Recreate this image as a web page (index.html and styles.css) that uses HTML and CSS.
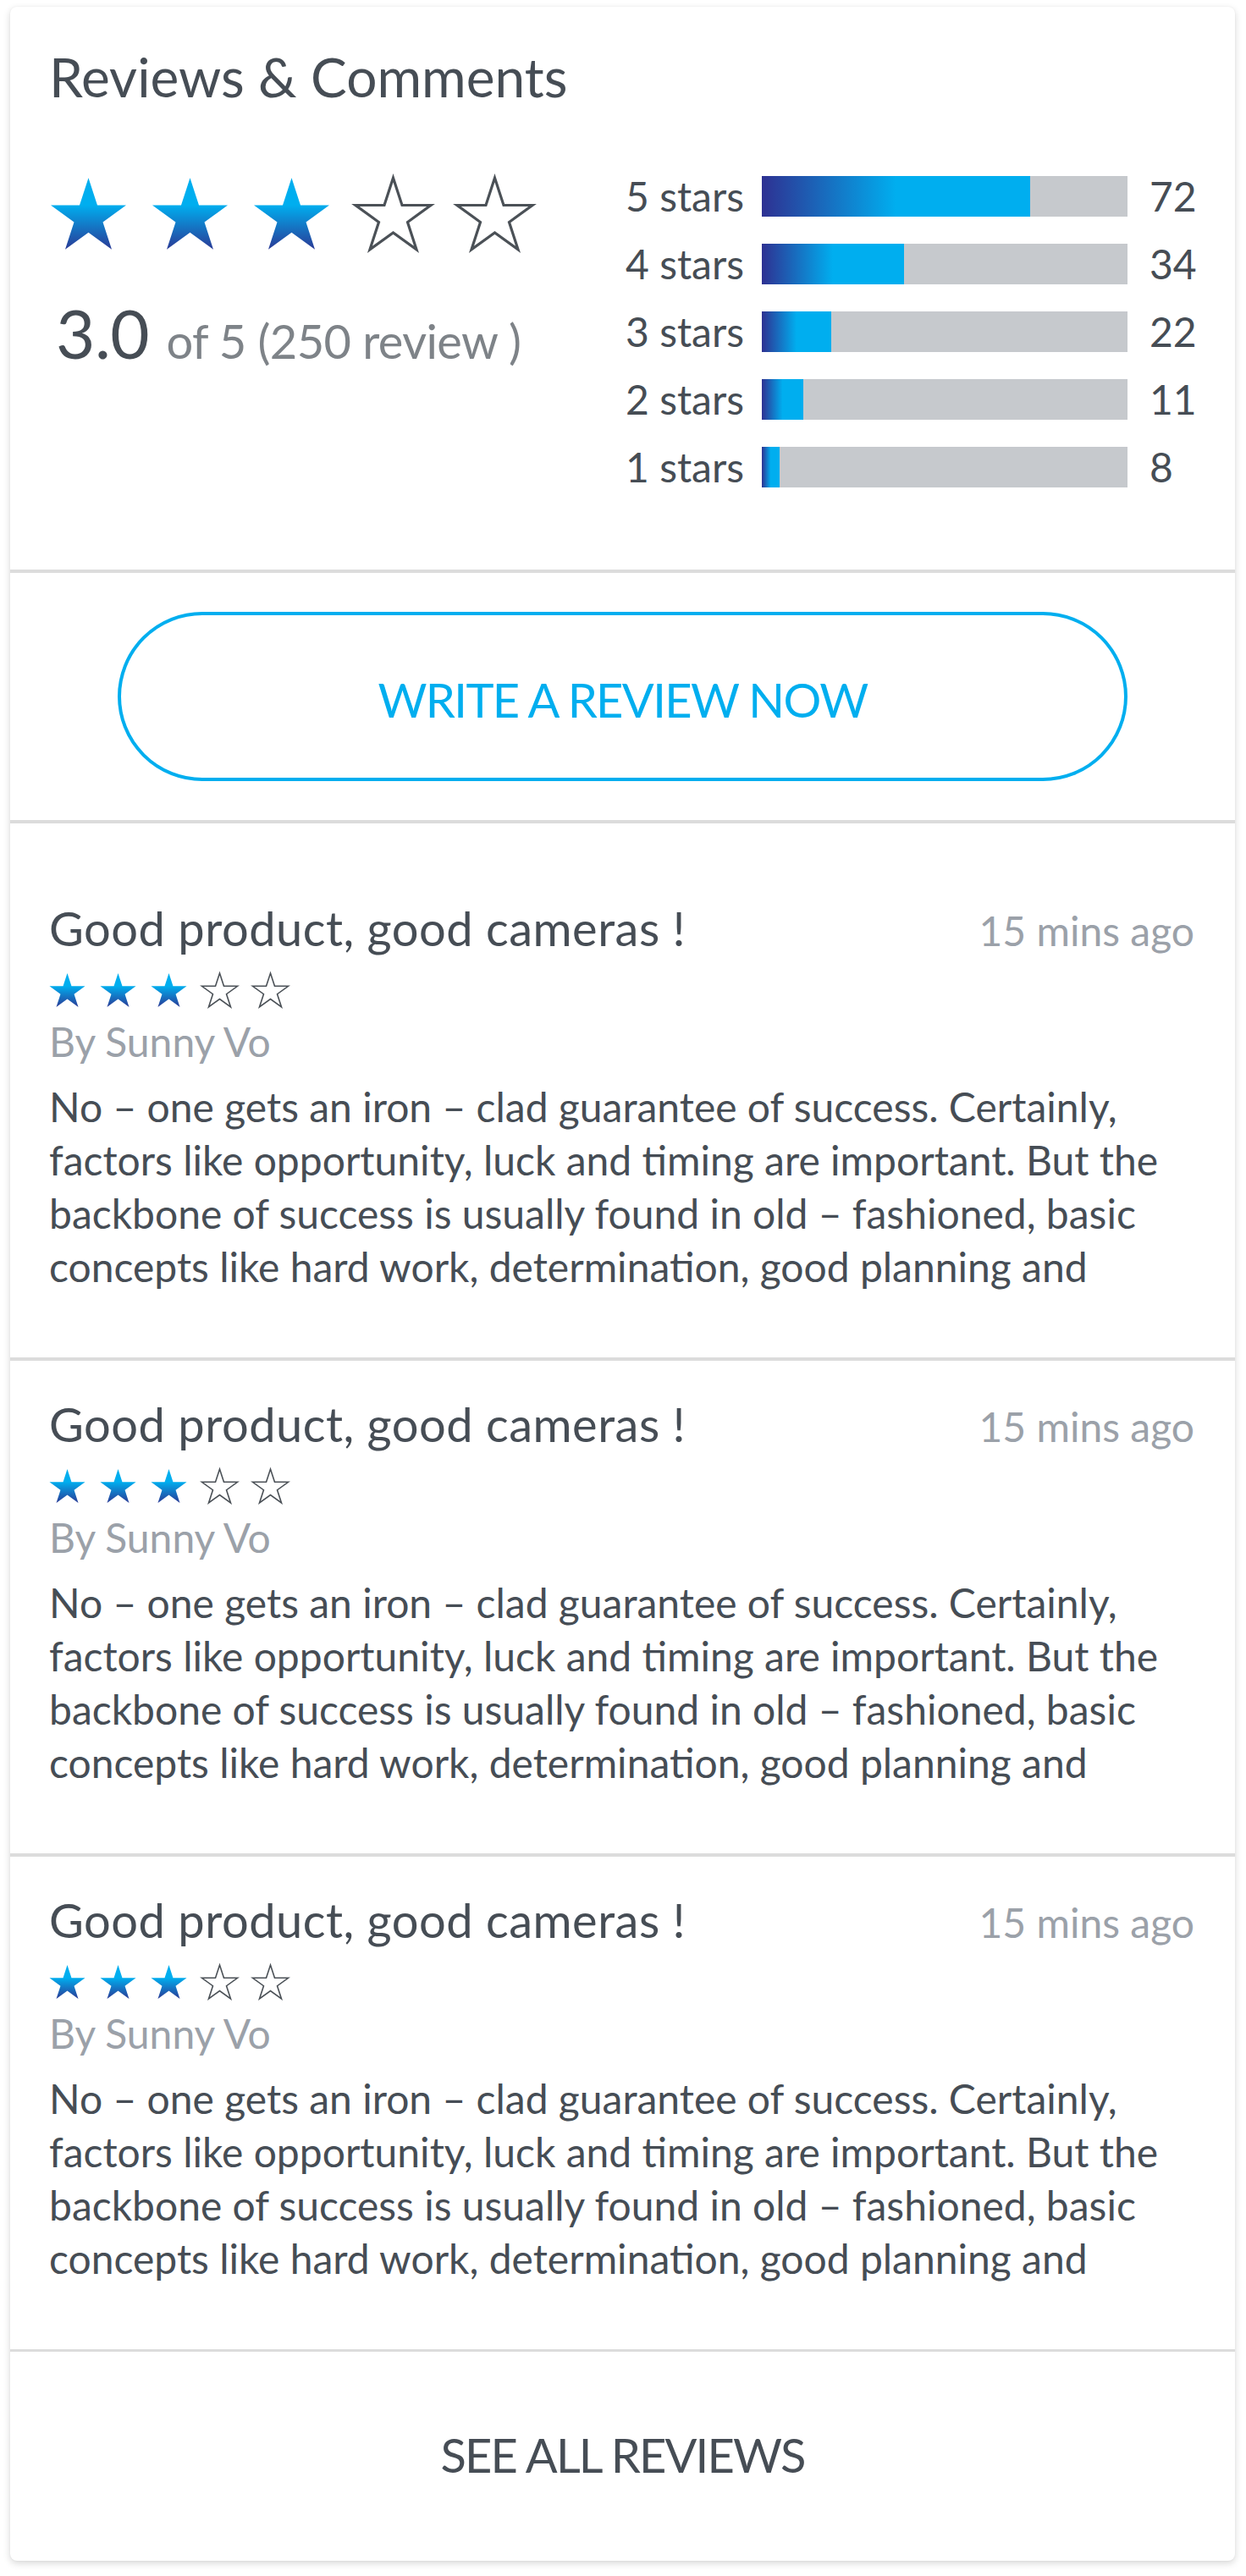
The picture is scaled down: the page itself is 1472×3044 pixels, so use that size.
FILE: index.html
```html
<!DOCTYPE html>
<html lang="en">
<head>
<meta charset="utf-8">
<title>Reviews &amp; Comments</title>
<link rel="stylesheet" href="styles.css">
</head>
<body>
<svg class="defs" width="0" height="0" aria-hidden="true">
  <defs>
    <linearGradient id="starGrad" x1="0" y1="0" x2="0" y2="1">
      <stop offset="0.38" stop-color="#00aeef"/>
      <stop offset="1" stop-color="#2a3a96"/>
    </linearGradient>
    <path id="starShape" d="M50 0 L61.23 34.55 L97.55 34.55 L68.17 55.9 L79.39 90.45 L50 69.1 L20.61 90.45 L31.83 55.9 L2.45 34.55 L38.77 34.55 Z"/>
  </defs>
</svg>

<div class="card">
  <section class="summary">
    <h1 class="title">Reviews &amp; Comments</h1>
    <div class="summary-body">
      <div class="overall">
        <div class="stars stars-lg">
          <svg class="star full" viewBox="2.45 0 95.1 90.45"><use href="#starShape"/></svg>
          <svg class="star full" viewBox="2.45 0 95.1 90.45"><use href="#starShape"/></svg>
          <svg class="star full" viewBox="2.45 0 95.1 90.45"><use href="#starShape"/></svg>
          <svg class="star empty" viewBox="2.45 0 95.1 90.45"><use href="#starShape"/></svg>
          <svg class="star empty" viewBox="2.45 0 95.1 90.45"><use href="#starShape"/></svg>
        </div>
        <div class="score"><span class="score-num">3.0</span> <span class="score-of">of 5 (250 review )</span></div>
      </div>
      <div class="breakdown">
        <div class="bar-row"><span class="bar-label">5 stars</span><div class="bar"><div class="bar-fill" style="width:73.4%"></div></div><span class="bar-count">72</span></div>
        <div class="bar-row"><span class="bar-label">4 stars</span><div class="bar"><div class="bar-fill" style="width:39%"></div></div><span class="bar-count">34</span></div>
        <div class="bar-row"><span class="bar-label">3 stars</span><div class="bar"><div class="bar-fill" style="width:19%"></div></div><span class="bar-count">22</span></div>
        <div class="bar-row"><span class="bar-label">2 stars</span><div class="bar"><div class="bar-fill" style="width:11.4%"></div></div><span class="bar-count">11</span></div>
        <div class="bar-row"><span class="bar-label">1 stars</span><div class="bar"><div class="bar-fill" style="width:4.9%"></div></div><span class="bar-count">8</span></div>
      </div>
    </div>
  </section>

  <section class="write">
    <button class="write-btn" type="button">WRITE A REVIEW NOW</button>
  </section>

  <section class="review review-first">
    <div class="review-head">
      <h2 class="review-title">Good product, good cameras !</h2>
      <span class="review-time">15 mins ago</span>
    </div>
    <div class="stars stars-sm">
      <svg class="star full" viewBox="2.45 0 95.1 90.45"><use href="#starShape"/></svg>
      <svg class="star full" viewBox="2.45 0 95.1 90.45"><use href="#starShape"/></svg>
      <svg class="star full" viewBox="2.45 0 95.1 90.45"><use href="#starShape"/></svg>
      <svg class="star empty" viewBox="2.45 0 95.1 90.45"><use href="#starShape"/></svg>
      <svg class="star empty" viewBox="2.45 0 95.1 90.45"><use href="#starShape"/></svg>
    </div>
    <div class="review-author">By Sunny Vo</div>
    <p class="review-body">No – one gets an iron – clad guarantee of success. Certainly, factors like opportunity, luck and timing are important. But the backbone of success is usually found in old – fashioned, basic concepts like hard work, determination, good planning and</p>
  </section>

  <section class="review">
    <div class="review-head">
      <h2 class="review-title">Good product, good cameras !</h2>
      <span class="review-time">15 mins ago</span>
    </div>
    <div class="stars stars-sm">
      <svg class="star full" viewBox="2.45 0 95.1 90.45"><use href="#starShape"/></svg>
      <svg class="star full" viewBox="2.45 0 95.1 90.45"><use href="#starShape"/></svg>
      <svg class="star full" viewBox="2.45 0 95.1 90.45"><use href="#starShape"/></svg>
      <svg class="star empty" viewBox="2.45 0 95.1 90.45"><use href="#starShape"/></svg>
      <svg class="star empty" viewBox="2.45 0 95.1 90.45"><use href="#starShape"/></svg>
    </div>
    <div class="review-author">By Sunny Vo</div>
    <p class="review-body">No – one gets an iron – clad guarantee of success. Certainly, factors like opportunity, luck and timing are important. But the backbone of success is usually found in old – fashioned, basic concepts like hard work, determination, good planning and</p>
  </section>

  <section class="review">
    <div class="review-head">
      <h2 class="review-title">Good product, good cameras !</h2>
      <span class="review-time">15 mins ago</span>
    </div>
    <div class="stars stars-sm">
      <svg class="star full" viewBox="2.45 0 95.1 90.45"><use href="#starShape"/></svg>
      <svg class="star full" viewBox="2.45 0 95.1 90.45"><use href="#starShape"/></svg>
      <svg class="star full" viewBox="2.45 0 95.1 90.45"><use href="#starShape"/></svg>
      <svg class="star empty" viewBox="2.45 0 95.1 90.45"><use href="#starShape"/></svg>
      <svg class="star empty" viewBox="2.45 0 95.1 90.45"><use href="#starShape"/></svg>
    </div>
    <div class="review-author">By Sunny Vo</div>
    <p class="review-body">No – one gets an iron – clad guarantee of success. Certainly, factors like opportunity, luck and timing are important. But the backbone of success is usually found in old – fashioned, basic concepts like hard work, determination, good planning and</p>
  </section>

  <section class="see-all">
    <a class="see-all-link" href="#">SEE ALL REVIEWS</a>
  </section>
</div>
</body>
</html>
```

FILE: styles.css
```css
html, body {
  margin: 0;
  padding: 0;
  background: #ffffff;
}

body {
  font-family: Lato, "Open Sans", "Liberation Sans", sans-serif;
  color: #464d55;
}

.defs {
  position: absolute;
  width: 0;
  height: 0;
  overflow: hidden;
}

.card {
  width: 1447px;
  margin: 8px 0 24px 12px;
  background: #ffffff;
  border-radius: 8px;
  box-shadow: 0 3px 8px rgba(0, 0, 0, 0.16), 0 0 2px rgba(0, 0, 0, 0.06);
  overflow: hidden;
}

/* ---------- summary ---------- */
.summary {
  padding: 43px 48px 97px 46px;
}

.title {
  margin: 0;
  font-size: 64px;
  line-height: 80px;
  font-weight: 400;
  color: #464d55;
}

.summary-body {
  display: flex;
  margin-top: 77px;
}

.overall {
  width: 681px;
  flex: none;
}

.stars {
  display: flex;
}

.star {
  display: block;
  overflow: visible;
}

.star.full use {
  fill: url(#starGrad);
}

.star.empty use {
  fill: #ffffff;
  stroke: #4b5157;
  stroke-linejoin: miter;
}

.stars-lg {
  gap: 31px;
  margin-top: 2px;
  margin-left: 2px;
}

.stars-lg .star {
  width: 89px;
  height: 85px;
}

.stars-lg .star.empty use {
  stroke-width: 3.4;
}

.stars-sm {
  gap: 17px;
  margin-top: 18px;
}

.stars-sm .star {
  width: 43px;
  height: 40px;
}

.stars-sm .star.empty use {
  stroke-width: 3.6;
}

.score {
  margin-top: 50px;
  padding-left: 8px;
  font-size: 56px;
  line-height: 96px;
}

.score-num {
  font-size: 80px;
  letter-spacing: -0.5px;
  color: #464d55;
}

.score-of {
  margin-left: 6px;
  font-size: 56px;
  letter-spacing: -0.6px;
  color: #7e8388;
}

.breakdown {
  flex: 1;
  display: flex;
  flex-direction: column;
  gap: 32px;
}

.bar-row {
  display: flex;
  align-items: center;
  height: 48px;
}

.bar-label {
  width: 161px;
  flex: none;
  font-size: 48px;
  line-height: 48px;
  color: #464d55;
}

.bar {
  width: 432px;
  height: 48px;
  flex: none;
  background: #c6c9cd;
}

.bar-fill {
  height: 100%;
  background: linear-gradient(to right, #2e3192 0%, #00aeef 50%, #00aeef 100%);
}

.bar-count {
  margin-left: 26px;
  font-size: 48px;
  line-height: 48px;
  color: #464d55;
}

/* ---------- write button ---------- */
.write {
  border-top: 4px solid #dcdcdc;
  padding: 46px 0;
  display: flex;
  justify-content: center;
}

.write-btn {
  width: 1193px;
  height: 200px;
  border: 4px solid #00aeef;
  border-radius: 100px;
  background: #ffffff;
  color: #00aeef;
  font-family: inherit;
  font-size: 56px;
  letter-spacing: -1.6px;
  padding: 6px 0 0 0;
  cursor: pointer;
}

/* ---------- reviews ---------- */
.review {
  border-top: 4px solid #dcdcdc;
  padding: 43px 48px 76px 46px;
}

.review-first {
  padding-top: 92px;
}

.review-head {
  display: flex;
  justify-content: space-between;
  align-items: baseline;
}

.review-title {
  margin: 0;
  font-size: 56px;
  line-height: 64px;
  font-weight: 400;
  letter-spacing: 0.5px;
  color: #464d55;
}

.review-time {
  font-size: 48px;
  line-height: 64px;
  color: #9ba1a9;
}

.review-author {
  margin-top: 13px;
  font-size: 48px;
  line-height: 56px;
  color: #9ba1a9;
}

.review-body {
  margin: 17px 0 0 0;
  max-width: 1335px;
  font-size: 48px;
  line-height: 63px;
  height: 252px;
  color: #464d55;
}

/* ---------- see all ---------- */
.see-all {
  border-top: 3px solid #dcdcdc;
  height: 247px;
  display: flex;
  align-items: center;
  justify-content: center;
}

.see-all-link {
  font-size: 56px;
  letter-spacing: -1.8px;
  margin-top: -4px;
  color: #464d55;
  text-decoration: none;
}
```
